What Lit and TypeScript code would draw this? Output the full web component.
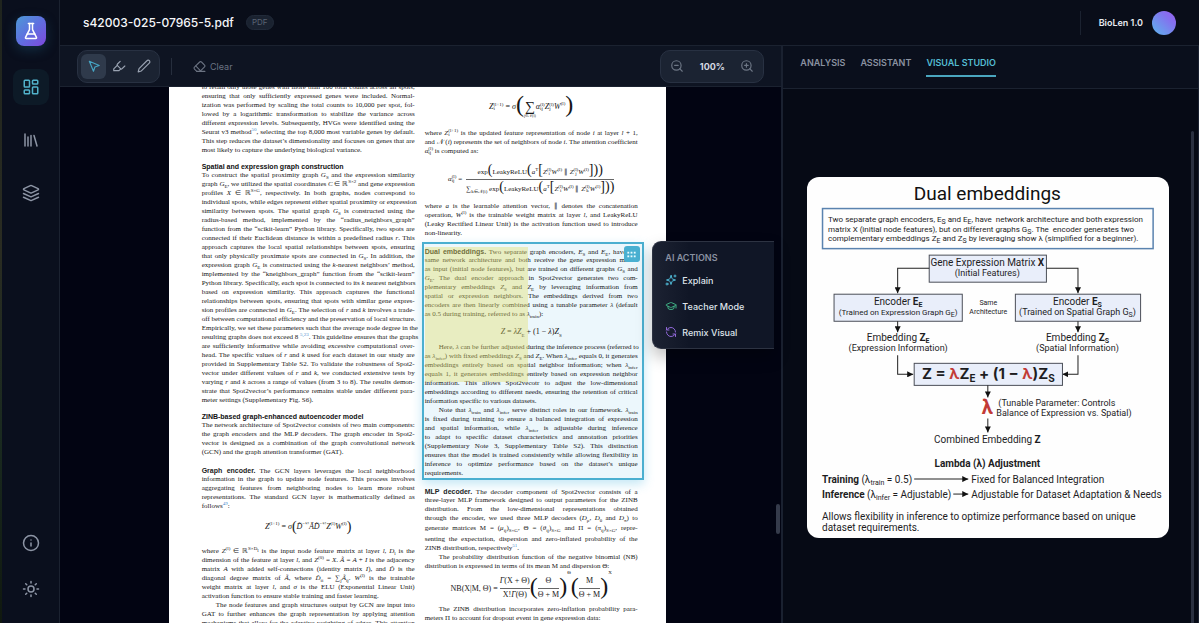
import { LitElement, html, svg, css, nothing } from "lit";
import { customElement, property, state } from "lit/decorators.js";
import { classMap } from "lit/directives/class-map.js";

/* ---------- icons ---------- */

const ICONS: Record<string, unknown> = {
  flask: svg`<path d="M10 2v7.5a2 2 0 0 1-.2.9L4.7 20.5a1 1 0 0 0 .9 1.5h12.8a1 1 0 0 0 .9-1.5l-5.1-10.1a2 2 0 0 1-.2-.9V2"/><path d="M8.5 2h7M7 16h10"/>`,
  dashboard: svg`<rect x="3" y="3" width="7" height="9" rx="1"/><rect x="14" y="3" width="7" height="5" rx="1"/><rect x="14" y="12" width="7" height="9" rx="1"/><rect x="3" y="16" width="7" height="5" rx="1"/>`,
  library: svg`<path d="m16 6 4 14M12 6v14M8 8v12M4 4v16"/>`,
  layers: svg`<path d="M12.83 2.18a2 2 0 0 0-1.66 0L2.6 6.08a1 1 0 0 0 0 1.83l8.58 3.91a2 2 0 0 0 1.66 0l8.58-3.9a1 1 0 0 0 0-1.83Z"/><path d="m22 17.65-9.17 4.16a2 2 0 0 1-1.66 0L2 17.65"/><path d="m22 12.65-9.17 4.16a2 2 0 0 1-1.66 0L2 12.65"/>`,
  info: svg`<circle cx="12" cy="12" r="10"/><path d="M12 16v-4M12 8h.01"/>`,
  sun: svg`<circle cx="12" cy="12" r="4"/><path d="M12 2v2M12 20v2M4.93 4.93l1.41 1.41M17.66 17.66l1.41 1.41M2 12h2M20 12h2M6.34 17.66l-1.41 1.41M19.07 4.93l-1.41 1.41"/>`,
  pointer: svg`<path d="m4 4 7.07 17 2.51-7.39L21 11.07z"/>`,
  highlighter: svg`<path d="m9 11-6 6v3h9l3-3"/><path d="m22 12-4.6 4.6a2 2 0 0 1-2.8 0l-5.2-5.2a2 2 0 0 1 0-2.8L14 4"/>`,
  pen: svg`<path d="M17 3a2.85 2.83 0 1 1 4 4L7.5 20.5 2 22l1.5-5.5Z"/>`,
  eraser: svg`<path d="m7 21-4.3-4.3c-1-1-1-2.5 0-3.4l9.6-9.6c1-1 2.5-1 3.4 0l5.6 5.6c1 1 1 2.5 0 3.4L13 21"/><path d="M22 21H7M5 11l9 9"/>`,
  zoomOut: svg`<circle cx="11" cy="11" r="8"/><path d="m21 21-4.35-4.35M8 11h6"/>`,
  zoomIn: svg`<circle cx="11" cy="11" r="8"/><path d="m21 21-4.35-4.35M11 8v6M8 11h6"/>`,
  sparkles: svg`<path d="m12 3-1.9 5.8a2 2 0 0 1-1.3 1.3L3 12l5.8 1.9a2 2 0 0 1 1.3 1.3L12 21l1.9-5.8a2 2 0 0 1 1.3-1.3L21 12l-5.8-1.9a2 2 0 0 1-1.3-1.3Z"/><path d="M20 2v4M22 4h-4"/><circle cx="4" cy="20" r="2"/>`,
  cap: svg`<path d="M21.42 10.92a1 1 0 0 0-.02-1.84L12.83 5.18a2 2 0 0 0-1.66 0L2.6 9.08a1 1 0 0 0 0 1.83l8.57 3.91a2 2 0 0 0 1.66 0z"/><path d="M22 10v6"/><path d="M6 12.5V16a6 3 0 0 0 12 0v-3.5"/>`,
  refresh: svg`<path d="M21 12a9 9 0 0 0-9-9 9.75 9.75 0 0 0-6.74 2.74L3 8"/><path d="M3 3v5h5"/><path d="M3 12a9 9 0 0 0 9 9 9.75 9.75 0 0 0 6.74-2.74L21 16"/><path d="M16 16h5v5"/>`,
  grip: svg`<g fill="currentColor" stroke="none"><rect x="3" y="6" width="4" height="4"/><rect x="10" y="6" width="4" height="4"/><rect x="17" y="6" width="4" height="4"/><rect x="3" y="14" width="4" height="4"/><rect x="10" y="14" width="4" height="4"/><rect x="17" y="14" width="4" height="4"/></g>`,
};

const icon = (name: string) => html`
  <svg class="icon" viewBox="0 0 24 24" fill="none" stroke="currentColor" stroke-width="2"
    stroke-linecap="round" stroke-linejoin="round" aria-hidden="true">${ICONS[name]}</svg>`;

const base = css`
  * { box-sizing: border-box; }
  button {
    font: inherit; color: inherit; background: none; border: 0; padding: 0; margin: 0; cursor: pointer;
  }
  .icon { display: block; width: 14px; height: 14px; flex: none; }
`;

/* ---------- side navigation ---------- */

@customElement("side-nav")
export class SideNav extends LitElement {
  @state() private current = "dashboard";

  static styles = [base, css`
    :host {
      display: flex; flex-direction: column; align-items: center; justify-content: space-between;
      width: 58px; padding: 16px 0; background: #0a0f1d; border-right: 1px solid #1b2230;
      color: #8d95a5;
    }
    .group { display: flex; flex-direction: column; align-items: center; gap: 17px; }
    .foot { gap: 10px; }
    .logo {
      display: grid; place-items: center; width: 30px; height: 30px; margin-bottom: 6px;
      border-radius: 8px; color: #fff; background: linear-gradient(135deg, #4c9ad6, #5f6fe0 50%, #7f48dc);
      box-shadow: 0 4px 12px #1d5a7a66;
    }
    .item { display: grid; place-items: center; width: 36px; height: 36px; border-radius: 9px; }
    .item .icon, .logo .icon { width: 18px; height: 18px; }
    .active { background: #0d1a27; color: #52b2cb; }
  `];

  private item(id: string, label: string) {
    return html`<button class=${classMap({ item: true, active: this.current === id })}
      aria-label=${label} @click=${() => (this.current = id)}>${icon(id)}</button>`;
  }

  render() {
    return html`
      <div class="group">
        <div class="logo">${icon("flask")}</div>
        ${this.item("dashboard", "Workspace")}
        ${this.item("library", "Library")}
        ${this.item("layers", "Layers")}
      </div>
      <div class="group foot">
        ${this.item("info", "About")}
        ${this.item("sun", "Theme")}
      </div>`;
  }
}

/* ---------- paper ---------- */

type Line = unknown;
const i = (t: string) => html`<i>${t}</i>`;
const v = (t: string, sub: unknown) => html`<i>${t}</i><sub>${sub}</sub>`;
const up = (t: string, sup: unknown) => html`<i>${t}</i><sup>${sup}</sup>`;
const both = (t: string, sup: unknown, sub: unknown) =>
  html`<i>${t}</i><span class="stack"><span>${sup}</span><span>${sub}</span></span>`;
const frac = (a: unknown, b: unknown) => html`<span class="frac"><span>${a}</span><span>${b}</span></span>`;
const big = (t: string) => html`<span class="big">${t}</span>`;
const mid = (t: string) => html`<span class="mid">${t}</span>`;
const ref = (t: string) => html`<a href="#ref"><sup>${t}</sup></a>`;
const run = (t: string) => html`<b>${t}</b>`;

/* One entry per typeset line; `open` marks a paragraph that continues past its last line. */
const para = (lines: Line[], opt: { indent?: boolean; open?: boolean; tall?: number } = {}) => html`
  <p class=${classMap({ indent: !!opt.indent, open: !!opt.open })}>
    ${lines.map((l, n) => html`<span class=${classMap({ line: true, tall: opt.tall === n })}>${l}</span>`)}
  </p>`;

const train = v("λ", "train");
const infer = v("λ", "infer");

@customElement("paper-page")
export class PaperPage extends LitElement {
  static styles = [base, css`
    :host {
      display: grid; grid-template-columns: 213px 213px; column-gap: 10px; align-content: start;
      flex: none; width: 497px; height: 760px; padding: 0 28px 0 33px; margin-top: -4px;
      background: #fff; color: #161616; font: 7px/9px "Liberation Serif", "Times New Roman", serif;
    }
    p, h2 { margin: 0; }
    h2 { font: bold 7px/9px "Liberation Sans", Arial, sans-serif; color: #111; padding-top: 7px; }
    b { font-family: "Liberation Sans", Arial, sans-serif; color: #222; }
    a { color: #4a90d0; text-decoration: none; }
    .line { display: block; height: 9px; white-space: nowrap; text-align: justify; text-align-last: justify; }
    .line:last-child { text-align-last: left; }
    .open .line:last-child { text-align-last: justify; }
    .indent .line:first-child { padding-left: 14px; }
    .tall { height: 12px; line-height: 11px; }
    .gap { margin-top: 9px; }
    sub, sup { font-size: 5px; line-height: 0; }
    .stack {
      display: inline-flex; flex-direction: column; vertical-align: middle;
      font-size: 5px; line-height: 4px; margin: -2px 0;
    }
    .frac { display: inline-flex; flex-direction: column; text-align: center; line-height: 12px; }
    .frac > :first-child { border-bottom: 1px solid #666; padding-bottom: 1px; }
    .eq { display: flex; align-items: center; justify-content: center; font-size: 8px; white-space: nowrap; }
    .dense { font-size: 7px; gap: 4px; }
    .eq-36 { height: 36px; padding-bottom: 5px; }
    .eq-46 { height: 46px; }
    .eq-24 { height: 24px; }
    .eq-34 { height: 34px; }
    .big { font-size: 24px; line-height: 24px; padding-bottom: 4px; }
    .mid { font-size: 14px; line-height: 14px; }
    .sum { display: inline-flex; flex-direction: column; align-items: center; font-size: 4px; line-height: 5px; padding-top: 6px; }
    .sum > :first-child { font-size: 14px; line-height: 12px; }
    .power { align-self: flex-start; }
    .selection {
      position: relative; margin: 4px -6px 7px -3px; padding: 3px 4px 0 1px;
      border: 2px solid #4bafd0; background: #ecf7fc;
      box-shadow: 0 4px 10px #4bb8e055;
    }
    .marker { position: absolute; left: 1px; top: 3px; width: 103px; height: 135px; background: #e4df6a66; }
    .handle {
      position: absolute; right: 2px; top: 2px; display: grid; place-items: center;
      width: 16px; height: 16px; border-radius: 3px; background: #49b0d1; color: #e8fbff;
    }
    .handle .icon { width: 11px; height: 11px; }
  `];

  private left() {
    return html`
      ${para([
        "to retain only those genes with more than 100 total counts across all spots,",
        "ensuring that only sufficiently expressed genes were included. Normal-",
        "ization was performed by scaling the total counts to 10,000 per spot, fol-",
        "lowed by a logarithmic transformation to stabilize the variance across",
        "different expression levels. Subsequently, HVGs were identified using the",
        html`Seurat v3 method${ref("50")}, selecting the top 8,000 most variable genes by default.`,
        "This step reduces the dataset’s dimensionality and focuses on genes that are",
        "most likely to capture the underlying biological variance.",
      ])}
      <h2>Spatial and expression graph construction</h2>
      ${para([
        html`To construct the spatial proximity graph ${v("G", "S")} and the expression similarity`,
        html`graph ${v("G", "E")}, we utilized the spatial coordinates ${i("C")} ∈ ℝ<sup>S×2</sup> and gene expression`,
        html`profiles ${i("X")} ∈ ℝ<sup>S×G</sup>, respectively. In both graphs, nodes correspond to`,
        "individual spots, while edges represent either spatial proximity or expression",
        html`similarity between spots. The spatial graph ${v("G", "S")} is constructed using the`,
        "radius-based method, implemented by the “radius_neighbors_graph”",
        "function from the “scikit-learn” Python library. Specifically, two spots are",
        html`connected if their Euclidean distance is within a predefined radius ${i("r")}. This`,
        "approach captures the local spatial relationships between spots, ensuring",
        html`that only physically proximate spots are connected in ${v("G", "S")}. In addition, the`,
        html`expression graph ${v("G", "E")} is constructed using the ${i("k")}-nearest neighbors’ method,`,
        "implemented by the “kneighbors_graph” function from the “scikit-learn”",
        html`Python library. Specifically, each spot is connected to its ${i("k")} nearest neighbors`,
        "based on expression similarity. This approach captures the functional",
        "relationships between spots, ensuring that spots with similar gene expres-",
        html`sion profiles are connected in ${v("G", "E")}. The selection of ${i("r")} and ${i("k")} involves a trade-`,
        "off between computational efficiency and the preservation of local structure.",
        "Empirically, we set these parameters such that the average node degree in the",
        html`resulting graphs does not exceed 8 ${ref("5,23")}. This guideline ensures that the graphs`,
        "are sufficiently informative while avoiding excessive computational over-",
        html`head. The specific values of ${i("r")} and ${i("k")} used for each dataset in our study are`,
        "provided in Supplementary Table S2. To validate the robustness of Spot2-",
        html`vector under different values of ${i("r")} and ${i("k")}, we conducted extensive tests by`,
        html`varying ${i("r")} and ${i("k")} across a range of values (from 3 to 8). The results demon-`,
        "strate that Spot2vector’s performance remains stable under different para-",
        "meter settings (Supplementary Fig. S6).",
      ])}
      <h2>ZINB-based graph-enhanced autoencoder model</h2>
      ${para([
        "The network architecture of Spot2vector consists of two main components:",
        "the graph encoders and the MLP decoders. The graph encoder in Spot2-",
        "vector is designed as a combination of the graph convolutional network",
        "(GCN) and the graph attention transformer (GAT).",
      ])}
      <div class="gap">${para([
        html`${run("Graph encoder.")} The GCN layers leverages the local neighborhood`,
        "information in the graph to update node features. This process involves",
        "aggregating features from neighboring nodes to learn more robust",
        "representations. The standard GCN layer is mathematically defined as",
        html`follows${ref("49")}:`,
      ])}</div>
      <div class="eq eq-36">
        <span>${up("Z", "(l+1)")} = ${i("σ")}</span>${mid("(")}
        <span>${up("D̃", "−½")}${i("Ã")}${up("D̃", "−½")}${up("Z", "(l)")}${up("W", "(l)")}</span>${mid(")")}
      </div>
      ${para([
        html`where ${up("Z", "(l)")} ∈ ℝ<sup>S×D<sub>l</sub></sup> is the input node feature matrix at layer ${i("l")}, ${v("D", "l")} is the`,
        html`dimension of the feature at layer ${i("l")}, and ${up("Z", "(0)")} = ${i("X")}. ${i("Ã")} = ${i("A")} + ${i("I")} is the adjacency`,
        html`matrix ${i("A")} with added self-connections (identity matrix ${i("I")}), and ${i("D̃")} is the`,
        html`diagonal degree matrix of ${i("Ã")}, where ${v("D̃", "ii")} = ∑<sub>j</sub>${v("Ã", "ij")}. ${up("W", "(l)")} is the trainable`,
        html`weight matrix at layer ${i("l")}, and ${i("σ")} is the ELU (Exponential Linear Unit)`,
        "activation function to ensure stable training and faster learning.",
      ])}
      ${para([
        "The node features and graph structures output by GCN are input into",
        "GAT to further enhances the graph representation by applying attention",
        "mechanisms that allow for the adaptive weighting of edges. This attention",
      ], { indent: true, open: true })}`;
  }

  private right() {
    const zw = (s: string) => html`${both("Z", "(l)", s)}${up("W", "(l)")}`;
    return html`
      <div class="eq eq-46">
        <span>${both("Z", "(l+1)", "i")} = ${i("σ")}</span>${big("(")}
        <span class="sum"><span>∑</span><span>j∈𝒩(i)</span></span>
        <span>${both("α", "(l)", "ij")}${both("Z", "(l)", "j")}${up("W", "(l)")}</span>${big(")")}
      </div>
      ${para([
        html`where ${both("Z", "(l+1)", "i")} is the updated feature representation of node ${i("i")} at layer ${i("l")} + 1,`,
        html`and 𝒩 (${i("i")}) represents the set of neighbors of node ${i("i")}. The attention coefficient`,
        html`${both("α", "(l)", "ij")} is computed as:`,
      ])}
      <div class="eq eq-46 dense">
        <span>${both("α", "(l)", "ij")} =</span>
        ${frac(
          html`exp${mid("(")}LeakyReLU${mid("(")}${up("a", "T")}${mid("[")}${zw("i")} ∥ ${zw("j")}${mid("]))")}`,
          html`∑<sub>k∈𝒩(i)</sub> exp${mid("(")}LeakyReLU${mid("(")}${up("a", "T")}${mid("[")}${zw("i")} ∥ ${zw("k")}${mid("]))")}`,
        )}
      </div>
      ${para([
        html`where ${i("a")} is the learnable attention vector, ∥ denotes the concatenation`,
        html`operation, ${up("W", "(l)")} is the trainable weight matrix at layer ${i("l")}, and LeakyReLU`,
        "(Leaky Rectified Linear Unit) is the activation function used to introduce",
        "non-linearity.",
      ])}
      <div class="selection">
        ${para([
          html`${run("Dual embeddings.")} Two separate graph encoders, ${v("E", "S")} and ${v("E", "E")}, have the`,
          "same network architecture and both receive the gene expression matrix",
          html`as input (initial node features), but are trained on different graphs ${v("G", "S")} and`,
          html`${v("G", "E")}. The dual encoder approach in Spot2vector generates two com-`,
          html`plementary embeddings ${v("Z", "S")} and ${v("Z", "E")} by leveraging information from`,
          "spatial or expression neighbors. The embeddings derived from two",
          html`encoders are then linearly combined using a tunable parameter ${i("λ")} (default`,
          html`as 0.5 during training, referred to as ${train}):`,
        ])}
        <div class="eq eq-24"><span>${i("Z")} = ${i("λ")}${v("Z", "E")} + (1 − ${i("λ")})${v("Z", "S")}</span></div>
        ${para([
          html`Here, ${i("λ")} can be further adjusted during the inference process (referred to`,
          html`as ${infer}) with fixed embeddings ${v("Z", "S")} and ${v("Z", "E")}. When ${infer} equals 0, it generates`,
          html`embeddings entirely based on spatial neighbor information; when ${infer}`,
          "equals 1, it generates embeddings entirely based on expression neighbor",
          "information. This allows Spot2vecotr to adjust the low-dimensional",
          "embeddings according to different needs, ensuring the retention of critical",
          "information specific to various datasets.",
        ], { indent: true })}
        ${para([
          html`Note that ${train} and ${infer} serve distinct roles in our framework. ${train}`,
          "is fixed during training to ensure a balanced integration of expression",
          html`and spatial information, while ${infer} is adjustable during inference`,
          "to adapt to specific dataset characteristics and annotation priorities",
          "(Supplementary Note 3, Supplementary Table S2). This distinction",
          "ensures that the model is trained consistently while allowing flexibility in",
          "inference to optimize performance based on the dataset’s unique",
          "requirements.",
        ], { indent: true })}
        <div class="marker"></div>
        <button class="handle" aria-label="Selection options">${icon("grip")}</button>
      </div>
      ${para([
        html`${run("MLP decoder.")} The decoder component of Spot2vector consists of a`,
        "three-layer MLP framework designed to output parameters for the ZINB",
        "distribution. From the low-dimensional representations obtained",
        html`through the encoder, we used three MLP decoders (${v("D", "μ")}, ${v("D", "θ")} and ${v("D", "π")}) to`,
        html`generate matrices M = (${v("μ", "ij")})<sub>S×G</sub>, Θ = (${v("θ", "ij")})<sub>S×G</sub> and Π = (${v("π", "ij")})<sub>S×G</sub>, repre-`,
        "senting the expectation, dispersion and zero-inflated probability of the",
        html`ZINB distribution, respectively${ref("51")}.`,
      ], { tall: 4 })}
      ${para([
        "The probability distribution function of the negative binomial (NB)",
        "distribution is expressed in terms of its mean M and dispersion Θ:",
      ], { indent: true })}
      <div class="eq eq-34">
        <span>NB(X|M, Θ) =&nbsp;</span>${frac(html`<i>Γ</i>(X + Θ)`, html`X!<i>Γ</i>(Θ)`)}
        ${big("(")}${frac("Θ", "Θ + M")}${big(")")}<span class="power"><sup>Θ</sup></span>
        ${big("(")}${frac("M", "Θ + M")}${big(")")}<span class="power"><sup>X</sup></span>
      </div>
      ${para([
        "The ZINB distribution incorporates zero-inflation probability para-",
        "meters Π to account for dropout event in gene expression data:",
      ], { indent: true })}`;
  }

  render() {
    return html`<div>${this.left()}</div><div>${this.right()}</div>`;
  }
}

/* ---------- document viewer ---------- */

@customElement("doc-viewer")
export class DocViewer extends LitElement {
  @state() private tool = "pointer";
  @state() private zoom = 100;

  static styles = [base, css`
    :host { display: flex; flex-direction: column; min-width: 0; min-height: 0; position: relative; }
    .toolbar {
      display: flex; align-items: center; height: 41px; flex: none; padding: 0 17px;
      background: #0e1422; border-bottom: 1px solid #1b2230; color: #9aa3b2; font-size: 9px;
    }
    .group {
      display: flex; align-items: center; height: 33px; padding: 0 3px;
      border: 1px solid #283142; border-radius: 10px; background: #1b2332;
    }
    .tool { display: grid; place-items: center; width: 25px; height: 25px; border-radius: 6px; }
    .active { background: #2f3a4b; color: #46a5c4; }
    .rule { width: 1px; height: 17px; margin: 0 21px 0 11px; background: #262e3d; }
    .clear { display: flex; align-items: center; gap: 4px; color: #6b7382; }
    .clear .icon { width: 13px; height: 13px; }
    .zoom { margin-left: auto; padding: 0 9px; gap: 12px; color: #6d7685; }
    .zoom output { width: 32px; text-align: center; font-size: 9px; font-weight: 700; color: #d5dae3; }
    .canvas {
      flex: 1; min-height: 0; display: flex; justify-content: center; align-items: flex-start;
      overflow: hidden; padding-right: 7px; background: #020412;
    }
    .thumb { position: absolute; right: 1px; bottom: 89px; width: 4px; height: 30px; border-radius: 2px; background: #353b4b; }
    .menu {
      position: absolute; right: 7px; top: 195px; width: 122px; height: 108px; padding: 10px 12px 0;
      display: flex; flex-direction: column; gap: 8px; border: 1px solid #2d3342; border-right: 0;
      border-radius: 9px 0 0 9px; background: linear-gradient(90deg, #1c2232, #101626 30%);
      box-shadow: 0 8px 16px #00000040; color: #dfe3ea; font-size: 9px; line-height: 11px; font-weight: 500;
    }
    .menu h3 { margin: 0; font-size: 9px; line-height: 11px; font-weight: 600; color: #8a91a1; }
    .menu button { display: flex; align-items: center; gap: 5px; height: 18px; flex: none; }
    .menu .icon { width: 12px; height: 12px; }
    .cyan .icon { color: #4fb9d6; }
    .green .icon { color: #3fae83; }
    .violet .icon { color: #9068d8; }
  `];

  render() {
    const tool = (id: string, label: string) => html`
      <button class=${classMap({ tool: true, active: this.tool === id })} aria-label=${label}
        @click=${() => (this.tool = id)}>${icon(id)}</button>`;
    return html`
      <div class="toolbar">
        <div class="group">
          ${tool("pointer", "Select")}${tool("highlighter", "Highlight")}${tool("pen", "Draw")}
        </div>
        <div class="rule"></div>
        <button class="clear">${icon("eraser")}<span>Clear</span></button>
        <div class="group zoom">
          <button aria-label="Zoom out" @click=${() => (this.zoom -= 10)}>${icon("zoomOut")}</button>
          <output>${this.zoom}%</output>
          <button aria-label="Zoom in" @click=${() => (this.zoom += 10)}>${icon("zoomIn")}</button>
        </div>
      </div>
      <div class="canvas"><paper-page></paper-page></div>
      <div class="thumb"></div>
      <div class="menu">
        <h3>AI ACTIONS</h3>
        <button class="cyan">${icon("sparkles")}<span>Explain</span></button>
        <button class="green">${icon("cap")}<span>Teacher Mode</span></button>
        <button class="violet">${icon("refresh")}<span>Remix Visual</span></button>
      </div>`;
  }
}

/* ---------- generated figure ---------- */

const sb = (t: string, after = "") =>
  svg`<tspan class="sub" dy="2">${t}</tspan>${after ? svg`<tspan dy="-2">${after}</tspan>` : nothing}`;

@customElement("embedding-figure")
export class EmbeddingFigure extends LitElement {
  static styles = css`
    :host { display: block; width: 100%; border-radius: 12px; background: #fefefe; overflow: hidden; }
    svg { display: block; width: 100%; height: auto; }
    text { font-family: Roboto, Inter, sans-serif; font-size: 9px; fill: #1d1d1f; }
    .mid { text-anchor: middle; }
    .title { font-size: 19px; fill: #111; }
    .small { font-size: 8px; }
    .tiny { font-size: 7px; }
    .sub { font-size: 7px; }
    .b { font-weight: 700; }
    .head { font-size: 10px; font-weight: 700; }
    .ten { font-size: 10px; }
    .formula { font-family: Inter, sans-serif; font-size: 15px; font-weight: 700; }
    .formula .sub { font-size: 10px; }
    .lambda { font-size: 20px; font-weight: 700; }
    .red { fill: #c23a36; }
    .box { fill: #e9eefa; stroke: #4b4f58; stroke-width: 1; }
    .note { fill: none; stroke: #5a83af; stroke-width: 1.5; }
    .wire { fill: none; stroke: #222; stroke-width: 1; marker-end: url(#tip); }
  `;

  render() {
    return html`
      <svg viewBox="0 0 361 361" role="img" aria-label="Dual embeddings diagram">
        <defs>
          <marker id="tip" viewBox="0 0 6 6" refX="6" refY="3" markerWidth="6" markerHeight="6" orient="auto">
            <path d="M0 0 6 3 0 6z" fill="#111"/>
          </marker>
        </defs>
        <text class="title mid" x="180" y="23">Dual embeddings</text>
        <rect class="note" x="15.5" y="31.5" width="330" height="40"/>
        <text class="small" x="21" y="45">Two separate graph encoders, E${sb("S", " and E")}${sb("E", ", have \u00a0network architecture and both expression")}</text>
        <text class="small" x="21" y="55">matrix X (initial node features), but on different graphs G${sb("S", ". The \u00a0encoder generates two")}</text>
        <text class="small" x="21" y="64">complementary embeddings Z${sb("E", " and Z")}${sb("S", " by leveraging show λ (simplified for a beginner).")}</text>

        <rect class="box" x="122" y="78" width="117" height="27"/>
        <text class="mid ten" x="180" y="89">Gene Expression Matrix <tspan class="b">X</tspan></text>
        <text class="mid" x="180" y="99">(Initial Features)</text>
        <path class="wire" d="M122 91H90.500V116"/>
        <path class="wire" d="M239 91H270.500V116"/>

        <rect class="box" x="27" y="117" width="128" height="27"/>
        <text class="mid ten" x="91" y="128">Encoder <tspan class="b">E</tspan><tspan class="b sub" dy="2">E</tspan></text>
        <text class="mid small" x="91" y="138">(Trained on Expression Graph G${sb("E", ")")}</text>
        <text class="mid tiny" x="181" y="128">Same</text>
        <text class="mid tiny" x="181" y="137">Architecture</text>
        <rect class="box" x="208" y="117" width="125" height="27"/>
        <text class="mid ten" x="270" y="128">Encoder <tspan class="b">E</tspan><tspan class="b sub" dy="2">S</tspan></text>
        <text class="mid" x="270" y="138">(Trained on Spatial Graph G${sb("S", ")")}</text>
        <path class="wire" d="M90.500 144V155"/>
        <path class="wire" d="M270.500 144V155"/>

        <text class="mid ten" x="91" y="164">Embedding <tspan class="b">Z</tspan><tspan class="b sub" dy="2">E</tspan></text>
        <text class="mid" x="91" y="174">(Expression Information)</text>
        <text class="mid ten" x="270" y="164">Embedding <tspan class="b">Z</tspan><tspan class="b sub" dy="2">S</tspan></text>
        <text class="mid" x="270" y="174">(Spatial Information)</text>
        <path class="wire" d="M90.500 178V197H106"/>
        <path class="wire" d="M270.500 178V197H255"/>

        <rect class="box" x="107" y="186" width="148" height="22"/>
        <text class="formula mid" x="181" y="202">Z = <tspan class="red">λ</tspan>Z<tspan class="sub" dy="3">E</tspan><tspan dy="-3"> + (1 − </tspan><tspan class="red">λ</tspan>)Z<tspan class="sub" dy="3">S</tspan></text>
        <path class="wire" d="M180.500 208V220"/>
        <text class="lambda red mid" x="180" y="237">λ</text>
        <text x="191" y="229">(Tunable Parameter: Controls</text>
        <text x="189" y="239">Balance of Expression vs. Spatial)</text>
        <path class="wire" d="M180.500 241V255"/>
        <text class="mid ten" x="180" y="266">Combined Embedding <tspan class="b">Z</tspan></text>

        <text class="mid head" x="180" y="289">Lambda (λ) Adjustment</text>
        <text class="ten" x="15" y="305"><tspan class="b">Training</tspan> (λ${sb("train", " = 0.5)")}</text>
        <path class="wire" d="M107 301.500H161"/>
        <text class="ten" x="164" y="305">Fixed for Balanced Integration</text>
        <text class="ten" x="15" y="320"><tspan class="b">Inference</tspan> (λ${sb("infer", " = Adjustable)")}</text>
        <path class="wire" d="M146 316.500H161"/>
        <text class="ten" x="164" y="320">Adjustable for Dataset Adaptation &amp; Needs</text>
        <text class="ten" x="15" y="342">Allows flexibility in inference to optimize performance based on unique</text>
        <text class="ten" x="15" y="353">dataset requirements.</text>
      </svg>`;
  }
}

/* ---------- studio panel ---------- */

@customElement("studio-panel")
export class StudioPanel extends LitElement {
  @property() active = "VISUAL STUDIO";

  static styles = [base, css`
    :host {
      display: flex; flex-direction: column; min-width: 0; min-height: 0;
      border-left: 2px solid #1a2130; border-right: 1px solid #1a2130; background: #060a15;
    }
    .tabs {
      display: flex; align-items: flex-start; gap: 15px; height: 43px; flex: none; padding: 10px 17px 0;
      background: #0a0f1c; border-bottom: 1px solid #1b2230;
    }
    .tab {
      height: 21px; padding-bottom: 7px; border-bottom: 2px solid transparent;
      font-size: 9px; line-height: 13px; font-weight: 600; color: #8a92a1;
    }
    .on { color: #55bdd3; border-color: #4aa6bf; }
    .body { flex: 1; min-height: 0; display: flex; align-items: center; padding: 3px 4px 0 24px; overflow: hidden; }
    .bar { align-self: flex-end; flex: none; width: 3px; height: calc(100% - 39px); margin-left: 22px; border-radius: 2px 2px 0 0; background: #2a3040; }
    embedding-figure { flex: 1; min-width: 0; }
  `];

  render() {
    return html`
      <div class="tabs" role="tablist">
        ${["ANALYSIS", "ASSISTANT", "VISUAL STUDIO"].map((t) => html`
          <button role="tab" class=${classMap({ tab: true, on: t === this.active })}
            @click=${() => (this.active = t)}>${t}</button>`)}
      </div>
      <div class="body"><embedding-figure></embedding-figure><div class="bar"></div></div>`;
  }
}

/* ---------- shell ---------- */

@customElement("app-root")
export class AppRoot extends LitElement {
  static styles = [base, css`
    :host {
      display: flex; height: 100vh; overflow: hidden; padding-left: 2px;
      background: linear-gradient(#1f241e, #2a2c22 40%, #1a2a20 70%, #10180f);
      font-family: Inter, "Liberation Sans", sans-serif; color: #e8ebf1;
    }
    side-nav { flex: none; }
    .main { flex: 1; min-width: 0; display: flex; flex-direction: column; background: #090d19; }
    .header {
      display: flex; align-items: center; height: 46px; flex: none; padding: 0 23px;
      border-bottom: 1px solid #1b2230;
    }
    .name { margin: 0; font-size: 12px; font-weight: 500; color: #f6f7fa; }
    .badge {
      margin-left: 12px; padding: 0 5px; border: 1px solid #212a39; border-radius: 8px; background: #1a2230;
      font: 8px/13px Inter, sans-serif; color: #596273;
    }
    .rule { width: 1px; height: 24px; margin-left: auto; background: #1b2230; }
    .brand { margin: 0 9px 0 18px; font-size: 9px; font-weight: 600; }
    .avatar { width: 24px; height: 24px; border-radius: 50%; background: linear-gradient(45deg, #5cb6ee, #8274ee 65%, #9a5cf0); }
    .work { flex: 1; min-height: 0; display: grid; grid-template-columns: minmax(0, 19fr) minmax(0, 11fr); grid-template-rows: minmax(0, 1fr); }
  `];

  render() {
    return html`
      <side-nav></side-nav>
      <div class="main">
        <div class="header">
          <h1 class="name">s42003-025-07965-5.pdf</h1>
          <span class="badge">PDF</span>
          <div class="rule"></div>
          <span class="brand">BioLen 1.0</span>
          <div class="avatar"></div>
        </div>
        <div class="work">
          <doc-viewer></doc-viewer>
          <studio-panel></studio-panel>
        </div>
      </div>`;
  }
}
